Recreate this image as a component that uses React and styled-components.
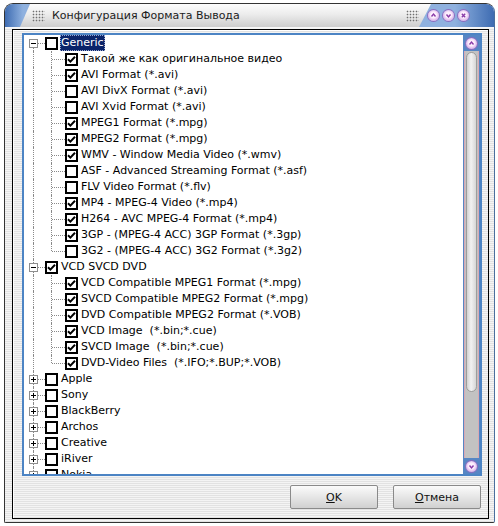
import React from 'react';
import styled, { createGlobalStyle } from 'styled-components';

const GlobalStyle = createGlobalStyle`
  html, body { margin: 0; padding: 0; background: #fff; }
  body { font-family: "DejaVu Sans", Verdana, sans-serif; font-size: 11px; color: #000; }
`;

const tree = [
    {
        label: 'Generic', checked: false, open: true, selected: true,
        children: [
            ['Такой же как оригинальное видео', true],
            ['AVI Format (*.avi)', true],
            ['AVI DivX Format (*.avi)', false],
            ['AVI Xvid Format (*.avi)', false],
            ['MPEG1 Format (*.mpg)', true],
            ['MPEG2 Format (*.mpg)', true],
            ['WMV - Window Media Video (*.wmv)', true],
            ['ASF - Advanced Streaming Format (*.asf)', false],
            ['FLV Video Format (*.flv)', false],
            ['MP4 - MPEG-4 Video (*.mp4)', true],
            ['H264 - AVC MPEG-4 Format (*.mp4)', true],
            ['3GP - (MPEG-4 ACC) 3GP Format (*.3gp)', true],
            ['3G2 - (MPEG-4 ACC) 3G2 Format (*.3g2)', false],
        ],
    },
    {
        label: 'VCD SVCD DVD', checked: true, open: true,
        children: [
            ['VCD Compatible MPEG1 Format (*.mpg)', true],
            ['SVCD Compatible MPEG2 Format (*.mpg)', true],
            ['DVD Compatible MPEG2 Format (*.VOB)', true],
            ['VCD Image  (*.bin;*.cue)', true],
            ['SVCD Image  (*.bin;*.cue)', true],
            ['DVD-Video Files  (*.IFO;*.BUP;*.VOB)', true],
        ],
    },
    { label: 'Apple' },
    { label: 'Sony' },
    { label: 'BlackBerry' },
    { label: 'Archos' },
    { label: 'Creative' },
    { label: 'iRiver' },
    { label: 'Nokia' },
];

function Tick() {
    return (
        <svg width="9" height="9" viewBox="0 0 9 9">
            <path d="M1 4.2 L3.4 6.6 L8 1.8" fill="none" stroke="#000" strokeWidth="2" />
        </svg>
    );
}

function CheckBox({ checked }) {
    return <Box>{checked && <Tick />}</Box>;
}

function Expander({ open }) {
    return (
        <ExpBox>
            <svg width="7" height="7" viewBox="0 0 7 7">
                <path d="M1 3.5 H6" stroke="#000" strokeWidth="1" />
                {!open && <path d="M3.5 1 V6" stroke="#000" strokeWidth="1" />}
            </svg>
        </ExpBox>
    );
}

function Chevron({ dir }) {
    const d = dir === 'up' ? 'M1.5 4.5 L3.5 2 L5.5 4.5' : dir === 'down' ? 'M1.5 2.5 L3.5 5 L5.5 2.5' : 'M1.8 1.8 L5.2 5.2 M5.2 1.8 L1.8 5.2';
    return (
        <RoundButton>
            <svg width="7" height="7" viewBox="0 0 7 7">
                <path d={d} fill="none" stroke="#8a3aa8" strokeWidth="1.4" />
            </svg>
        </RoundButton>
    );
}

function App() {
    const rows = [];
    tree.forEach((node, i) => {
        rows.push(
            <Row key={node.label}>
                <TopCell first={i === 0}>
                    <Expander open={node.open} />
                </TopCell>
                <CheckBox checked={node.checked} />
                <Label selected={node.selected}>{node.label}</Label>
            </Row>
        );
        if (node.open) {
            node.children.forEach(([label, checked], j) => {
                rows.push(
                    <Row key={label}>
                        <GuideCell />
                        <BranchCell last={j === node.children.length - 1} />
                        <CheckBox checked={checked} />
                        <Label>{label}</Label>
                    </Row>
                );
            });
        }
    });

    return (
        <Page>
            <GlobalStyle />
            <Window>
                <TitleBar>
                    <Caption>
                        <Grip />
                        <Title>Конфигурация Формата Вывода</Title>
                        <Grip />
                    </Caption>
                    <TitleButtons>
                        <Chevron dir="up" />
                        <Chevron dir="down" />
                        <Chevron dir="close" />
                    </TitleButtons>
                </TitleBar>
                <Body>
                    <Frame>
                        <ListBox>
                            <Tree>{rows}</Tree>
                            <ScrollBar>
                                <ScrollButton><Chevron dir="up" /></ScrollButton>
                                <Track><Thumb /></Track>
                                <ScrollButton><Chevron dir="down" /></ScrollButton>
                            </ScrollBar>
                        </ListBox>
                        <ButtonRow>
                            <DialogButton><u>O</u>K</DialogButton>
                            <DialogButton><u>О</u>тмена</DialogButton>
                        </ButtonRow>
                    </Frame>
                </Body>
            </Window>
        </Page>
    );
}

const Page = styled.div`
    padding: 3px 0 0 4px;
`;
const Window = styled.div`
    width: 491px;
    height: 520px;
    box-sizing: border-box;
    border: 1px solid #333;
    border-right-color: #4a6f9e;
    border-radius: 9px 9px 2px 2px;
    overflow: hidden;
    display: flex;
    flex-direction: column;
    background: repeating-linear-gradient(to bottom, #f4f4f4 0 1px, #e2e2e2 1px 2px);
`;
const TitleBar = styled.div`
    height: 23px;
    flex: none;
    display: flex;
    align-items: center;
    background: linear-gradient(to right, #3e6cb2 0, #8fb1df 18px, #8fb1df 92%, #3e6cb2 100%);
    border-bottom: 1px solid #f6f6f6;
`;
const Caption = styled.div`
    flex: 1;
    height: 100%;
    margin-left: 15px;
    display: flex;
    align-items: center;
    padding: 0 12px 0 12px;
    clip-path: polygon(10px 0, 100% 0, calc(100% - 12px) 100%, 0 100%);
    background: linear-gradient(to bottom, #fcfcfc 0, #ececec 45%, #cdcdcd 100%);
`;
const Grip = styled.span`
    width: 13px;
    height: 12px;
    flex: none;
    background: radial-gradient(circle, #6f6f6f 0 0.7px, transparent 1.1px) 0 0 / 3px 3px;
    &:last-child { margin-left: auto; }
`;
const Title = styled.span`
    margin-left: 7px;
    font-size: 11px;
    color: #1c1c1c;
    white-space: nowrap;
`;
const TitleButtons = styled.div`
    display: flex;
    gap: 4px;
    margin-left: -3px;
    padding-right: 25px;
`;
const RoundButton = styled.span`
    width: 11px;
    height: 11px;
    border-radius: 50%;
    display: flex;
    align-items: center;
    justify-content: center;
    box-shadow: 0 0 0 1px #8c6cc0;
    background: radial-gradient(circle at 50% 45%, #fdf0fd 0 35%, #e4c2ee 60%, #b08ad6 100%);
`;
const Body = styled.div`
    flex: 1;
    padding: 1px 5px 3px 7px;
    display: flex;
`;
const Frame = styled.div`
    flex: 1;
    border: 1px solid #000;
    box-shadow: inset 1px 1px 0 #fff;
    padding: 3px 6px 8px 9px;
    display: flex;
    flex-direction: column;
`;
const ListBox = styled.div`
    height: 443px;
    box-sizing: border-box;
    border: 2px solid #4c84c4;
    background: #fff;
    display: flex;
`;
const Tree = styled.div`
    flex: 1;
    overflow: hidden;
`;
const Row = styled.div`
    height: 16px;
    display: flex;
    align-items: center;
`;
const TopCell = styled.div`
    position: relative;
    width: 18px;
    align-self: stretch;
    flex: none;
    display: flex;
    align-items: center;
    padding-left: 5px;
    box-sizing: border-box;
    &::before {
        content: '';
        position: absolute;
        left: 9px;
        top: ${p => (p.first ? '8px' : '0')};
        bottom: 0;
        border-left: 1px dotted #8a8a8a;
    }
    &::after {
        content: '';
        position: absolute;
        left: 9px;
        right: -3px;
        top: 8px;
        border-top: 1px dotted #8a8a8a;
    }
`;
const GuideCell = styled.div`
    position: relative;
    width: 18px;
    align-self: stretch;
    flex: none;
    &::before {
        content: '';
        position: absolute;
        left: 9px;
        top: 0;
        bottom: 0;
        border-left: 1px dotted #8a8a8a;
    }
`;
const BranchCell = styled.div`
    position: relative;
    width: 20px;
    align-self: stretch;
    flex: none;
    &::before {
        content: '';
        position: absolute;
        left: 9px;
        top: 0;
        height: ${p => (p.last ? '8px' : '16px')};
        border-left: 1px dotted #8a8a8a;
    }
    &::after {
        content: '';
        position: absolute;
        left: 10px;
        right: -3px;
        top: 8px;
        border-top: 1px dotted #8a8a8a;
    }
`;
const ExpBox = styled.span`
    position: relative;
    z-index: 1;
    width: 9px;
    height: 9px;
    box-sizing: border-box;
    border: 1px solid #8e8e8e;
    background: #fff;
    display: flex;
`;
const Box = styled.span`
    position: relative;
    width: 13px;
    height: 13px;
    flex: none;
    box-sizing: border-box;
    margin-left: 3px;
    border: 2px solid #000;
    background: #fff;
    display: flex;
    align-items: center;
    justify-content: center;
`;
const Label = styled.span`
    margin-left: 2px;
    padding: 0 1px;
    line-height: 16px;
    white-space: pre;
    color: ${p => (p.selected ? '#fff' : '#000')};
    background: ${p => (p.selected ? '#0a246a' : 'transparent')};
    outline: ${p => (p.selected ? '1px dotted #9aa8d0' : 'none')};
    outline-offset: -1px;
`;
const ScrollBar = styled.div`
    width: 17px;
    flex: none;
    display: flex;
    flex-direction: column;
    background: #5686c4;
`;
const ScrollButton = styled.div`
    height: 16px;
    flex: none;
    display: flex;
    align-items: center;
    justify-content: center;
`;
const Track = styled.div`
    flex: 1;
    margin: 0 1px;
    padding: 1px 1px 0;
    background: #c2c2c2;
    border-left: 1px solid #d8a8b4;
    border-right: 1px solid #d8a8b4;
`;
const Thumb = styled.div`
    height: 340px;
    box-sizing: border-box;
    border: 1px solid #9c9c9c;
    border-radius: 6px;
    background: linear-gradient(to right, #d2d2d2, #f2f2f2 45%, #d6d6d6);
`;
const ButtonRow = styled.div`
    display: flex;
    justify-content: flex-end;
    gap: 15px;
    margin-top: 9px;
    padding-right: 1px;
`;
const DialogButton = styled.button`
    width: 88px;
    height: 24px;
    padding: 0;
    font-family: "DejaVu Sans", Verdana, sans-serif;
    font-size: 11px;
    color: #111;
    border: 1px solid #8a8a8a;
    border-radius: 2px;
    background: linear-gradient(to bottom, #fbfbfb 0, #e6e6e6 50%, #d0d0d0 100%);
`;

export default App;
